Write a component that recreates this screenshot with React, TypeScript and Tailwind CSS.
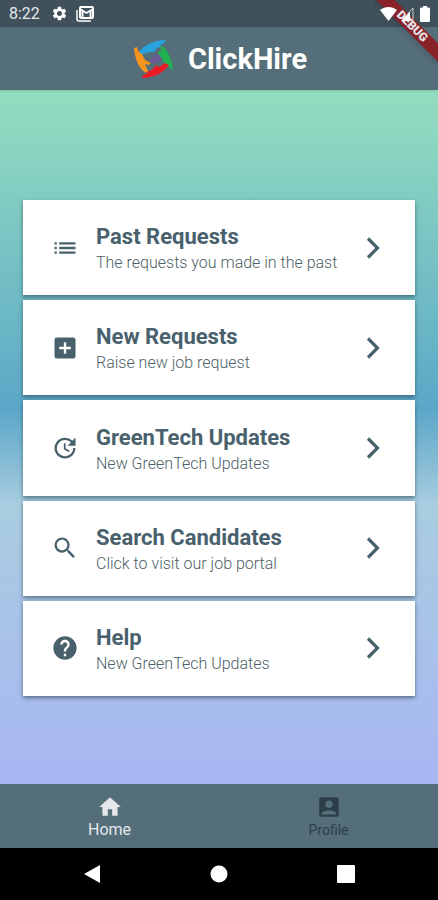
import React from "react";
import { IconType } from "react-icons";
import {
  MdAccountBox,
  MdAddBox,
  MdHelp,
  MdHome,
  MdList,
  MdSearch,
  MdSettings,
  MdUpdate,
} from "react-icons/md";

interface MenuItem {
  title: string;
  subtitle: string;
  icon: IconType;
}

const menuItems: MenuItem[] = [
  { title: "Past Requests", subtitle: "The requests you made in the past", icon: MdList },
  { title: "New Requests", subtitle: "Raise new job request", icon: MdAddBox },
  { title: "GreenTech Updates", subtitle: "New GreenTech Updates", icon: MdUpdate },
  { title: "Search Candidates", subtitle: "Click to visit our job portal", icon: MdSearch },
  { title: "Help", subtitle: "New GreenTech Updates", icon: MdHelp },
];

const Logo: React.FC = () => (
  <svg viewBox="0 0 40 40" className="size-10" aria-hidden="true">
    <path d="M19 17 L24 14 L27 19 L25 23 L20 25 L15 22 Z" fill="#6c5b95" />
    <path
      d="M5 13 C10 6 20 1 32 1 L30 4 L26 6 L28 7 L23 9 L20 13 L15 13 L7 16 Z"
      fill="#29a3de"
    />
    <path
      d="M27 6 C34 11 38 20 39 32 L36 29 L34 27 L31 25 L27 18 L24 15 L24 12 L27 13 Z"
      fill="#20b04f"
    />
    <path
      d="M35 26 C29 34 20 39 8 39 L9 36 L14 34 L12 33 L18 31 L22 26 L25 28 L31 24 Z"
      fill="#ed1c24"
    />
    <path
      d="M12 34 C4 29 1 19 0 9 L3 8 L4 12 L8 15 L11 21 L17 24 L15 26 L11 25 L14 32 Z"
      fill="#f7941d"
    />
  </svg>
);

const Chevron: React.FC = () => (
  <svg viewBox="0 0 26 26" className="size-[26px] shrink-0" aria-hidden="true">
    <path d="M7 3.500 L16.500 13 L7 22.500" fill="none" stroke="currentColor" strokeWidth="3.2" />
  </svg>
);

const StatusBar: React.FC = () => (
  <div className="flex h-[27px] items-center justify-between bg-[#41515b] pr-2 pl-[9px] text-white">
    <div className="flex items-center">
      <span className="w-[42px] text-base leading-5 text-gray-200">8:22</span>
      <MdSettings size={17} />
      <svg viewBox="0 0 18 16" className="ml-2 h-4 w-[18px]" aria-hidden="true">
        <path d="M1 4 V13 Q1 15 3 15 H15" fill="none" stroke="currentColor" strokeWidth="1.5" />
        <rect x="4" y="1" width="13" height="11" rx="1" fill="none" stroke="currentColor" strokeWidth="2" />
        <path d="M4 2 L10.500 6 L17 2 V4 L10.500 8 L4 4 Z" fill="currentColor" />
        <path d="M6.500 4 V11 M14.500 4 V11" fill="none" stroke="currentColor" strokeWidth="2" />
      </svg>
    </div>
    {/* System icons stay above the debug banner */}
    <div className="relative z-20 flex items-center">
      <svg viewBox="0 0 17 14" className="h-[14px] w-[17px]" aria-hidden="true">
        <path d="M0 3 C5 -1 12 -1 17 3 L8.500 14 Z" fill="currentColor" />
      </svg>
      <svg viewBox="0 0 13 14" className="ml-1 h-[14px] w-[13px]" aria-hidden="true">
        <path d="M0 14 L9 4 V14 Z" fill="currentColor" />
        <path d="M9 4 L12 1 V13.500 H9" fill="none" stroke="currentColor" strokeOpacity="0.7" />
      </svg>
      <svg viewBox="0 0 10 16" className="ml-[6px] h-4 w-[10px]" aria-hidden="true">
        <path d="M3 0 H7 V1.500 H9 Q10 1.500 10 2.500 V15 Q10 16 9 16 H1 Q0 16 0 15 V2.500 Q0 1.500 1 1.500 H3 Z" fill="currentColor" />
      </svg>
    </div>
  </div>
);

const DebugBanner: React.FC = () => (
  <div className="pointer-events-none absolute top-0 right-0 z-10 size-16 overflow-hidden">
    <div className="absolute top-5 -right-6 w-[100px] rotate-45 bg-[#8a2229] text-center text-xs leading-[13px] font-black text-gray-200 shadow-md">
      DEBUG
    </div>
  </div>
);

const MenuCard: React.FC<MenuItem> = ({ title, subtitle, icon: Icon }) => (
  <button
    type="button"
    className="flex flex-1 items-center bg-white px-7 text-left text-[#48616d] shadow-[0_2px_4px_rgba(40,60,75,0.6)]"
  >
    <Icon size={28} className="shrink-0" />
    <span className="ml-[17px] min-w-0 flex-1 pt-[3px]">
      <span className="block text-[22px] leading-7 font-bold">{title}</span>
      <span className="block text-base leading-6 font-light text-[#4d5f68]">{subtitle}</span>
    </span>
    <Chevron />
  </button>
);

export default function App() {
  return (
    <div className="relative flex min-h-screen flex-col overflow-hidden font-[Roboto,sans-serif]">
      <StatusBar />
      <DebugBanner />

      <header className="z-[1] flex h-[63px] items-center justify-center gap-[14px] bg-[#546e7a] pl-[3px] text-white shadow-sm">
        <Logo />
        <h1 className="text-[29px] leading-8 font-bold">ClickHire</h1>
      </header>

      <main className="flex flex-1 flex-col gap-[5px] bg-[linear-gradient(#92dcbf_0%,#8cd7c0_7%,#5ba7c8_46%,#a9cde0_60%,#a8b6f3_100%)] px-[23px] pt-[110px] pb-[88px]">
        {menuItems.map((item) => (
          <MenuCard key={item.title} {...item} />
        ))}
      </main>

      <nav className="grid h-16 grid-cols-2 bg-[#546e7a]">
        <button type="button" className="flex flex-col items-center justify-center pt-[2px] text-base leading-5 text-gray-200">
          <MdHome size={26} />
          Home
        </button>
        <button type="button" className="flex flex-col items-center justify-center pt-[2px] text-sm leading-5 text-[#2c3e48]">
          <MdAccountBox size={26} />
          Profile
        </button>
      </nav>

      <div className="flex h-[52px] items-center justify-around bg-black px-7 text-white">
        <button type="button" aria-label="Back">
          <svg viewBox="0 0 18 18" className="size-[18px]" fill="currentColor">
            <path d="M1 9 L17 0 V18 Z" />
          </svg>
        </button>
        <button type="button" aria-label="Home screen">
          <svg viewBox="0 0 18 18" className="size-[18px]" fill="currentColor">
            <circle cx="9" cy="9" r="8.500" />
          </svg>
        </button>
        <button type="button" aria-label="Recent apps">
          <svg viewBox="0 0 18 18" className="size-[18px]" fill="currentColor">
            <rect width="18" height="18" rx="1" />
          </svg>
        </button>
      </div>
    </div>
  );
}
